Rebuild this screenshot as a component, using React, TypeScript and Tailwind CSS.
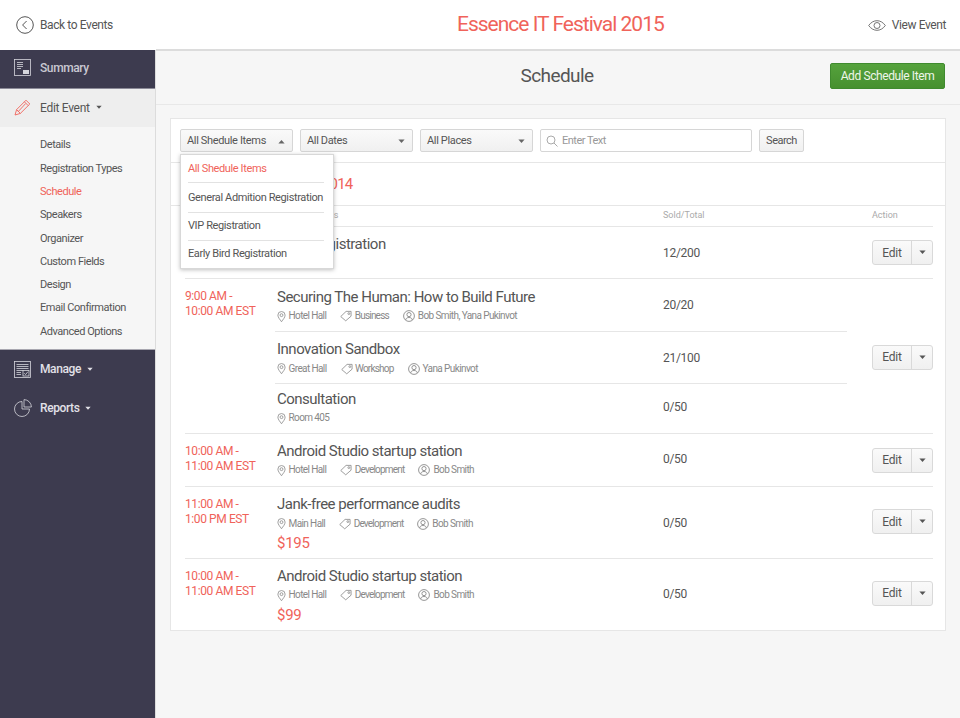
import React from 'react'

const sideLinks = ['Details', 'Registration Types', 'Schedule', 'Speakers', 'Organizer', 'Custom Fields', 'Design', 'Email Confirmation', 'Advanced Options']

const Caret = ({ up = false, className = '' }: { up?: boolean; className?: string }) => (
  <svg width="9" height="5" viewBox="0 0 9 5" className={className}>
    <path d={up ? 'M0.5 5L4.5 0.5L8.5 5Z' : 'M0.5 0L4.5 4.5L8.5 0Z'} fill="currentColor" />
  </svg>
)

const Pin = () => (
  <svg width="9" height="13" viewBox="0 0 10 13" fill="none" stroke="#8a8a8a" strokeWidth="0.9" className="shrink-0">
    <path d="M5 12.3C3.4 9.9 1 7.6 1 5A4 4 0 0 1 9 5C9 7.6 6.6 9.9 5 12.3Z" />
    <circle cx="5" cy="5" r="1.6" />
  </svg>
)

const Tag = () => (
  <svg width="12" height="12" viewBox="0 0 13 12" fill="none" stroke="#8a8a8a" strokeWidth="0.9" className="shrink-0">
    <path d="M0.8 6.6L6.6 1H12V6.2L6.2 11.2Z" strokeLinejoin="round" />
    <circle cx="9.6" cy="3.4" r="1" />
  </svg>
)

const Person = () => (
  <svg width="12" height="12" viewBox="0 0 12 12" fill="none" stroke="#8a8a8a" strokeWidth="0.9" className="shrink-0">
    <circle cx="6" cy="6" r="5.4" />
    <circle cx="6" cy="4.6" r="2.1" />
    <path d="M2.6 10C3 8.2 4.2 7.5 6 7.5S9 8.2 9.4 10" />
  </svg>
)

const Meta = ({ place, tag, who }: { place: string; tag?: string; who?: string }) => (
  <div className="flex items-center h-[13px] mt-[3px] text-[10px] tracking-[-0.6px] text-[#888] leading-none">
    <Pin />
    <span className="ml-[2.5px] mr-[14px]">{place}</span>
    {tag && (
      <>
        <Tag />
        <span className="ml-[2.5px] mr-[14px] tracking-[-0.8px]">{tag}</span>
      </>
    )}
    {who && (
      <>
        <Person />
        <span className="ml-[3px]">{who}</span>
      </>
    )}
  </div>
)

const EditBtn = () => (
  <div className="flex h-[25px] w-[61px] rounded-[3px] border border-[#d9d9d9] bg-linear-to-b from-[#fafafa] to-[#f0f0f0] text-[12px] tracking-[-0.2px] text-[#555]">
    <span className="flex-1 flex items-center justify-center border-r border-[#d9d9d9]">Edit</span>
    <span className="w-[20px] flex items-center justify-center text-[#555]">
      <Caret className="w-[7px]" />
    </span>
  </div>
)

const Session = ({ title, place, tag, who, sold, price, divided, className = 'flex-1' }: { title: string; place: string; tag?: string; who?: string; sold: string; price?: string; divided?: boolean; className?: string }) => (
  <div className={`flex items-center ${className} ${divided ? 'border-t border-[#e6e6e6]' : ''}`}>
    <div className={`w-[388px] pl-[2px] ${price ? 'pt-[3px]' : 'pb-[1px]'}`}>
      <div className="text-[15px] leading-[20px] tracking-[-0.5px] text-[#555]">{title}</div>
      <Meta place={place} tag={tag} who={who} />
      {price && <div className="text-[15px] leading-[22px] mt-[2px] tracking-[-0.3px] text-[#f0635a]">{price}</div>}
    </div>
    <div className="text-[12px] tracking-[-0.3px] text-[#555]">{sold}</div>
  </div>
)

const Row = ({ time, height, action = '', children }: { time: string[]; height: string; action?: string; children: React.ReactNode }) => (
  <div className={`flex border-t border-[#e6e6e6] ${height}`}>
    <div className="w-[90px] pt-[10px] text-[12px] leading-[15px] tracking-[-0.4px] text-[#f0635a] shrink-0">
      {time.map((t) => <div key={t}>{t}</div>)}
    </div>
    <div className="flex flex-1 justify-between">
      <div className="w-[572px] flex flex-col">{children}</div>
      <div className={`flex items-center ${action}`}><EditBtn /></div>
    </div>
  </div>
)

const Select = ({ label, up }: { label: string; up?: boolean }) => (
  <div className="flex items-center justify-between w-[113px] h-[23px] pl-[6px] pr-[7px] pt-[1px] rounded-[2px] border border-[#d6d6d6] bg-linear-to-b from-[#fafafa] to-[#f0f0f0] text-[11px] tracking-[-0.35px] text-[#555]">
    <span>{label}</span>
    <Caret up={up} className="w-[7px] text-[#666]" />
  </div>
)

const App = () => {
  return (
    <div className="h-[718px] w-[960px] overflow-hidden flex flex-col bg-[#f6f6f6] font-['Roboto',sans-serif]">
      <header className="h-[50px] shrink-0 flex items-center bg-white pl-[16px] pr-[14px]">
        <div className="flex items-center w-[441px] text-[12px] tracking-[-0.4px] text-[#555]">
          <svg width="18" height="18" viewBox="0 0 18 18" fill="none" stroke="#555" strokeWidth="1">
            <circle cx="9" cy="9" r="8.3" />
            <path d="M10.6 5L6.6 9L10.6 13" />
          </svg>
          <span className="ml-[6px]">Back to Events</span>
        </div>
        <div className="text-[21px] tracking-[-1px] text-[#f0635a]">Essence IT Festival 2015</div>
        <div className="flex flex-1 items-center justify-end text-[12px] tracking-[-0.4px] text-[#555]">
          <svg width="18" height="11" viewBox="0 0 18 11" fill="none" stroke="#666" strokeWidth="0.9">
            <path d="M0.7 5.5C3 2.2 6 0.7 9 0.7S15 2.2 17.3 5.5C15 8.8 12 10.3 9 10.3S3 8.8 0.7 5.5Z" />
            <circle cx="9" cy="5.5" r="3" />
          </svg>
          <span className="ml-[6px]">View Event</span>
        </div>
      </header>

      <div className="flex flex-1 min-h-0">
        <aside className="w-[156px] shrink-0 bg-[#3d3b4f] border-r border-[#dcdcdc] flex flex-col">
          <div className="h-[39px] flex items-center pl-[14px] pb-[3px] text-[12px] font-medium tracking-[-0.4px] text-[#c9c8d2] border-b border-[#8b8a97]">
            <svg width="17" height="17" viewBox="0 0 17 17" fill="none" stroke="#d5d5dc" strokeWidth="0.8">
              <rect x="0.5" y="0.5" width="16" height="16" />
              <path d="M3 3.5H9M3 5.5H9M3 7.5H9M3 9.5H7" />
              <rect x="9" y="11" width="6" height="4" fill="#d5d5dc" stroke="none" />
            </svg>
            <span className="ml-[9px]">Summary</span>
          </div>
          <div className="h-[38px] flex items-center pl-[14px] pb-[1px] text-[12px] tracking-[-0.3px] text-[#555] bg-[#eeeeee]">
            <svg width="17" height="17" viewBox="0 0 17 17" fill="none" stroke="#f0635a" strokeWidth="0.9">
              <path d="M1 16L2.6 10.6L12 1.2L15.8 5L6.4 14.4Z" strokeLinejoin="round" />
              <path d="M2.6 10.6L6.4 14.4M10.4 2.8L14.2 6.6M4 12.8L11.6 4.6" />
            </svg>
            <span className="ml-[9px]">Edit Event</span>
            <Caret className="w-[6px] ml-[6px] text-[#555]" />
          </div>
          <ul className="h-[223px] pt-[7px] pl-[40px] bg-[#f6f6f6] text-[11px] tracking-[-0.45px] text-[#555] border-b border-[#a8a7b0]">
            {sideLinks.map((l) => (
              <li key={l} className={`h-[23.3px] flex items-center ${l === 'Schedule' ? 'text-[#f0635a]' : ''}`}>{l}</li>
            ))}
          </ul>
          <div className="h-[39px] flex items-center pl-[14px] pb-[1px] text-[12px] font-medium tracking-[-0.4px] text-[#e2e1e8]">
            <svg width="17" height="17" viewBox="0 0 17 17" fill="none" stroke="#d5d5dc" strokeWidth="0.8">
              <rect x="0.5" y="0.5" width="16" height="16" />
              <path d="M2.5 3.5H14.5M2.5 5.5H14.5M2.5 7.5H14.5M2.5 9.5H9M2.5 11.5H7M2.5 13.5H7" />
              <rect x="9" y="9.5" width="6" height="5.5" />
              <path d="M10.3 12.2L11.6 13.6L13.8 10.8" />
            </svg>
            <span className="ml-[9px]">Manage</span>
            <Caret className="w-[6px] ml-[6px] text-[#e2e1e8]" />
          </div>
          <div className="h-[39px] flex items-center pl-[14px] pb-[1px] text-[12px] font-medium tracking-[-0.4px] text-[#e2e1e8]">
            <svg width="18" height="18" viewBox="0 0 18 18" fill="none" stroke="#d5d5dc" strokeWidth="0.8">
              <path d="M8 2.5A7.5 7.5 0 1 0 15.5 10H8Z" />
              <path d="M10 0.6A7.5 7.5 0 0 1 17.4 8H10Z" />
            </svg>
            <span className="ml-[8px]">Reports</span>
            <Caret className="w-[6px] ml-[6px] text-[#e2e1e8]" />
          </div>
        </aside>

        <main className="flex-1 min-w-0 flex flex-col border-t border-[#dcdcdc] shadow-[0_-1px_0_#dcdcdc]">
          <div className="h-[54px] shrink-0 flex items-center justify-between border-b border-[#e8e8e8] pr-[15px] pb-[3px]">
            <div className="flex-1 text-center pl-[128px] text-[19px] tracking-[-0.6px] text-[#555]">Schedule</div>
            <div className="w-[115px] h-[26px] flex items-center justify-center rounded-[2px] border border-[#3f8a2e] bg-linear-to-b from-[#55a23c] to-[#46902f] text-[12px] tracking-[-0.4px] text-[#eef6ea]">
              Add Schedule Item
            </div>
          </div>

          <section className="relative mt-[13px] ml-[14px] w-[776px] h-[513px] bg-white border border-[#e6e6e6]">
            <div className="h-[44px] flex items-center pl-[9px] border-b border-[#e6e6e6] gap-[7px]">
              <Select label="All Shedule Items" up />
              <Select label="All Dates" />
              <Select label="All Places" />
              <div className="flex items-center w-[212px] h-[23px] px-[5px] pt-[1px] rounded-[2px] border border-[#d6d6d6] bg-white text-[11px] tracking-[-0.5px] text-[#999]">
                <svg width="12" height="12" viewBox="0 0 12 12" fill="none" stroke="#aaa" strokeWidth="1">
                  <circle cx="5" cy="5" r="4" />
                  <path d="M8 8L11.5 11.5" />
                </svg>
                <span className="ml-[4px]">Enter Text</span>
              </div>
              <div className="flex items-center justify-center w-[45px] h-[23px] pt-[1px] rounded-[2px] border border-[#d6d6d6] bg-linear-to-b from-[#fafafa] to-[#f0f0f0] text-[11px] tracking-[-0.5px] text-[#555]">
                Search
              </div>
            </div>

            <div className="h-[43px] flex items-center pl-[14px] border-b border-[#e6e6e6] text-[15px] tracking-[-0.75px] text-[#f0635a]">
              Wednesday, March 14, 2014
            </div>

            <div className="mx-[14px] w-[748px]">
              <div className="flex items-center h-[20px] text-[9px] text-[#aaa]">
                <span className="w-[478px] pl-[92px]">Session Details</span>
                <span className="w-[209px]">Sold/Total</span>
                <span>Action</span>
              </div>

              <Row time={['8:00 AM -', '9:00 AM EST']} height="h-[52px]">
                <Session title="Main Registration" place="Hotel Hall" sold="12/200" />
              </Row>
              <Row time={['9:00 AM -', '10:00 AM EST']} height="h-[155px]" action="pt-[2px]">
                <Session className="h-[52px]" title="Securing The Human: How to Build Future" place="Hotel Hall" tag="Business" who="Bob Smith, Yana Pukinvot" sold="20/20" />
                <Session className="h-[52px]" divided title="Innovation Sandbox" place="Great Hall" tag="Workshop" who="Yana Pukinvot" sold="21/100" />
                <Session className="flex-1 pb-[3px]" divided title="Consultation" place="Room 405" sold="0/50" />
              </Row>
              <Row time={['10:00 AM -', '11:00 AM EST']} height="h-[53px]">
                <Session className="flex-1 pb-[2px]" title="Android Studio startup station" place="Hotel Hall" tag="Development" who="Bob Smith" sold="0/50" />
              </Row>
              <Row time={['11:00 AM -', '1:00 PM EST']} height="h-[72px]" action="pb-[2px]">
                <Session title="Jank-free performance audits" place="Main Hall" tag="Development" who="Bob Smith" sold="0/50" price="$195" />
              </Row>
              <Row time={['10:00 AM -', '11:00 AM EST']} height="h-[71px]" action="pb-[2px]">
                <Session title="Android Studio startup station" place="Hotel Hall" tag="Development" who="Bob Smith" sold="0/50" price="$99" />
              </Row>
            </div>

            <div className="absolute left-[9px] top-[35px] w-[154px] bg-white border border-[#d8d8d8] shadow-[0_1px_4px_rgba(0,0,0,0.25)] text-[11px] tracking-[-0.38px] text-[#555] pl-[7px] pr-[9px]">
              <div className="h-[28px] flex items-center pt-[1px] border-b border-[#e2e2e2] text-[#f0635a]">All Shedule Items</div>
              <div className="h-[30px] flex items-center pt-[1px] border-b border-[#e2e2e2] whitespace-nowrap">General Admition Registration</div>
              <div className="h-[28px] flex items-center border-b border-[#e2e2e2]">VIP Registration</div>
              <div className="h-[27px] flex items-center">Early Bird Registration</div>
            </div>
          </section>
        </main>
      </div>
    </div>
  )
}

export default App
